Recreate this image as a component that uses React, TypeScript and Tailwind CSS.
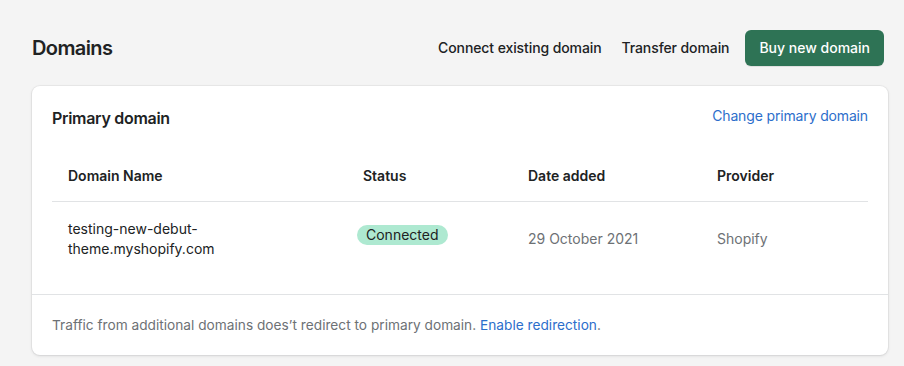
import React from "react";

const columns = "grid grid-cols-[289px_171px_189px_167px]";

const App = () => {
  return (
    <div
      className="min-h-[366px] w-[904px] bg-[#f4f4f4] pl-8 pr-4 pt-[30px] text-[#202223]"
      style={{ fontFamily: "Inter, 'Liberation Sans', sans-serif" }}
    >
      <div className="flex h-9 items-center justify-between pr-1">
        <h1 className="text-[20px] font-semibold leading-7 tracking-[-0.6px]">Domains</h1>
        <div className="flex items-center">
          <button className="text-[14px] font-medium leading-5 tracking-[-0.1px]">Connect existing domain</button>
          <button className="ml-5 text-[14px] font-medium leading-5 tracking-[-0.1px]">Transfer domain</button>
          <button className="ml-4 h-9 rounded-md bg-[#2e7355] px-[14px] text-[14px] font-medium leading-5 text-white shadow-[0_1px_0_rgba(0,0,0,0.08)]">
            Buy new domain
          </button>
        </div>
      </div>

      <div className="mt-5 rounded-lg bg-white shadow-[0_0_0_1px_rgba(63,63,68,0.05),0_1px_3px_rgba(63,63,68,0.15)]">
        <div className="px-5 pt-5">
          <div className="flex items-center justify-between">
            <h2 className="text-[16px] font-semibold leading-6 tracking-[-0.3px]">Primary domain</h2>
            <a className="mb-1 text-[14px] leading-5 tracking-[-0.15px] text-[#2c6ecb]">Change primary domain</a>
          </div>

          <div className="mt-5">
            <div className={`${columns} h-[52px] items-center border-b border-[#e1e3e5] text-[14px] font-semibold`}>
              <div className="px-4">Domain Name</div>
              <div className="px-4 pl-[22px]">Status</div>
              <div className="px-4">Date added</div>
              <div className="px-4">Provider</div>
            </div>
            <div className={`${columns} items-center pb-[35px] pt-[17px] text-[14px] leading-5`}>
              <div className="px-4">
                testing-new-debut-
                <br />
                theme.myshopify.com
              </div>
              <div className="px-4">
                <span className="mb-2 inline-block rounded-full bg-[#aee9d1] px-[9px] leading-5 text-[#202223]">
                  Connected
                </span>
              </div>
              <div className="px-4 text-[#6d7175]">29 October 2021</div>
              <div className="px-4 text-[#6d7175]">Shopify</div>
            </div>
          </div>
        </div>

        <div className="border-t border-[#e1e3e5] px-5 py-5 text-[13.7px] leading-5 text-[#6d7175]">
          Traffic from additional domains does’t redirect to primary domain.{" "}
          <a className="text-[#2c6ecb]">Enable redirection</a>.
        </div>
      </div>
    </div>
  );
};

export default App;
